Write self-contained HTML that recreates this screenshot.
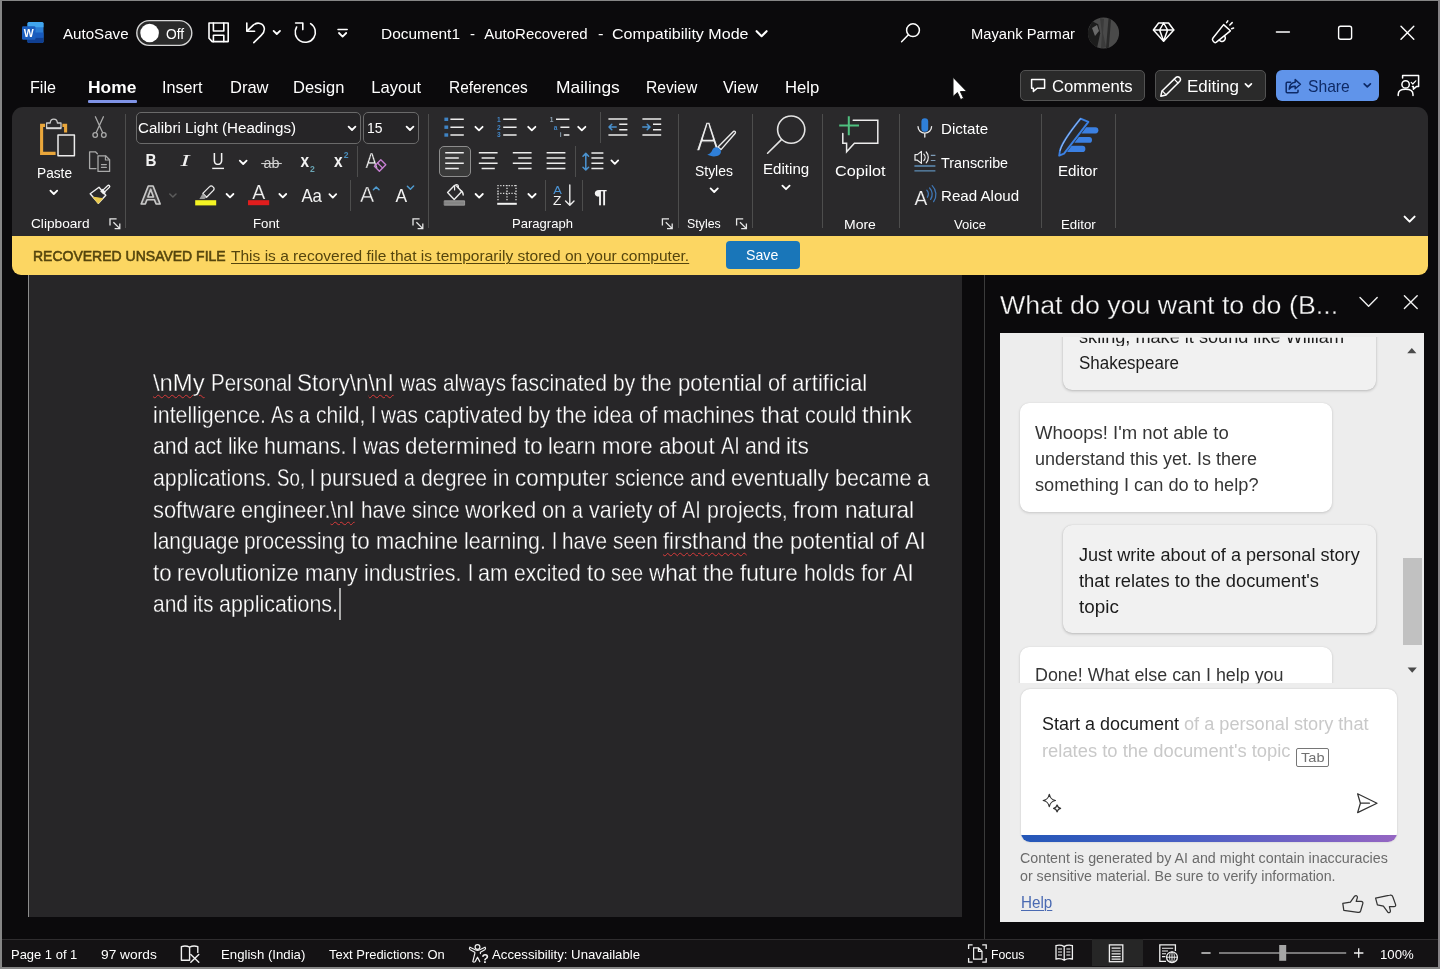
<!DOCTYPE html>
<html lang="en">
<head>
<meta charset="utf-8">
<title>Document1 - AutoRecovered - Compatibility Mode - Word</title>
<style>
*{box-sizing:border-box;margin:0;padding:0}
html,body{width:1440px;height:969px;overflow:hidden;background:#0b0a0c}
body{font-family:"Liberation Sans",sans-serif;color:#fff;position:relative}
.a{position:absolute}
.t{position:absolute;white-space:nowrap;line-height:1;transform-origin:0 0;color:#fff}
svg{position:absolute;overflow:visible}
#win{left:0;top:0;width:1440px;height:969px;background:#0b0a0c;border-left:2.2px solid #868686;border-right:2.1px solid #868386;border-top:1.9px solid #868686;border-bottom:2.3px solid #868686}
#ribbon{left:12px;top:107px;width:1416px;height:130px;background:#2a292b;border-radius:11px 11px 0 0}
#ybar{left:12px;top:236px;width:1416px;height:38.5px;background:#fcd662;border-radius:0 0 9px 9px}
#savebtn{left:726px;top:241px;width:73.5px;height:28px;background:#1976b9;border-radius:4px}
#page{left:28px;top:274.5px;width:934px;height:642px;background:#272628;border-left:1px solid #8c8c8c}
#vline{left:984px;top:274.5px;width:1px;height:664px;background:#3b3b3b}
#chat{left:1000px;top:332.5px;width:423.5px;height:589.5px;background:#ededed}
.bub{position:absolute;border-radius:9px}
.bub.u{background:#f1f1f1;box-shadow:0 1px 3px rgba(0,0,0,.22),0 0 1px rgba(0,0,0,.12)}
.bub.b{background:#fff;box-shadow:0 1px 3px rgba(0,0,0,.16),0 0 1px rgba(0,0,0,.1)}
#status{left:2px;top:939px;width:1436px;height:27.7px;background:#141214;border-top:1px solid #2f2d2f}
.btn{position:absolute;border-radius:5px;border:1px solid #525252;background:#2a2a2a}
.sep{position:absolute;width:1px;background:#4d4d4d}
.box{position:absolute;border:1px solid #6a6a6a;border-radius:5px;background:#262527}
.sq{text-decoration:underline wavy #d83b3b;text-decoration-thickness:1px;text-underline-offset:3px}
</style>
</head>
<body>
<div id="win" class="a"></div>
<!-- tab row buttons -->
<div class="a" style="left:88px;top:100px;width:49px;height:2.5px;background:#7f93e6;border-radius:1px"></div>
<div class="btn" style="left:1020px;top:70px;width:124.5px;height:31px"></div>
<div class="btn" style="left:1155px;top:70px;width:110.5px;height:31px"></div>
<div class="a" style="left:1276px;top:70px;width:103px;height:31px;background:#6094ea;border-radius:6px"></div>
<!-- ribbon -->
<div id="ribbon" class="a"></div>
<div class="sep" style="left:125px;top:114px;height:114px"></div>
<div class="sep" style="left:428px;top:114px;height:114px"></div>
<div class="sep" style="left:677.5px;top:114px;height:114px"></div>
<div class="sep" style="left:751.5px;top:114px;height:114px"></div>
<div class="sep" style="left:821.5px;top:114px;height:114px"></div>
<div class="sep" style="left:898.5px;top:114px;height:114px"></div>
<div class="sep" style="left:1041px;top:114px;height:114px"></div>
<div class="sep" style="left:1115px;top:114px;height:114px"></div>
<div class="sep" style="left:357px;top:146px;height:31px"></div>
<div class="sep" style="left:350px;top:180px;height:31px"></div>
<div class="sep" style="left:599.5px;top:112px;height:31px"></div>
<div class="sep" style="left:574.5px;top:146px;height:31px"></div>
<div class="sep" style="left:545px;top:180px;height:31px"></div>
<div class="sep" style="left:582px;top:180px;height:31px"></div>
<div class="box" style="left:135.5px;top:112px;width:225px;height:31.7px"></div>
<div class="box" style="left:363px;top:112px;width:55.5px;height:31.7px"></div>
<div class="a" style="left:438.5px;top:146px;width:32px;height:31px;border:1px solid #8d8d8d;border-radius:5px;background:#3a3a3a"></div>
<!-- yellow bar -->
<div id="ybar" class="a"></div>
<div id="savebtn" class="a"></div>
<!-- document -->
<div id="page" class="a"></div>
<div class="a" style="left:339.3px;top:588px;width:1.8px;height:32px;background:#ababab"></div>
<!-- pane -->
<div id="vline" class="a"></div>
<div id="chat" class="a"></div>
<div class="a" style="left:1000px;top:336.5px;width:402px;height:346px;overflow:hidden">
  <div class="bub u" style="left:62.5px;top:-24px;width:313px;height:77px"></div>
  <div class="bub b" style="left:19.5px;top:66px;width:312px;height:109px"></div>
  <div class="bub u" style="left:62.5px;top:188px;width:313px;height:108.5px"></div>
  <div class="bub b" style="left:19.5px;top:310px;width:312px;height:80px"></div>
</div>
<div class="a" style="left:1403px;top:558px;width:18.5px;height:87px;background:#c1c1c1"></div>
<div class="a" style="left:1020.5px;top:688.5px;width:376px;height:153.5px;background:#fff;border-radius:9px;box-shadow:0 0 2px rgba(0,0,0,.18);overflow:hidden">
  <div class="a" style="left:0;top:146.5px;width:376px;height:7px;background:linear-gradient(90deg,#2457b8 0%,#4a5fc4 45%,#7a62c4 80%,#9566c2 100%)"></div>
</div>
<div class="a" style="left:1295.5px;top:748px;width:33.5px;height:18.5px;border:1px solid #767676;border-radius:2px"></div>
<!-- status -->
<div id="status" class="a"></div>
<div class="a" style="left:1092px;top:939px;width:50.5px;height:27px;background:#262626"></div>
<svg id="icons" width="1440" height="969" viewBox="0 0 1440 969" style="left:0;top:0;will-change:transform" fill="none" stroke-linecap="round" stroke-linejoin="round">
<!-- ===== TITLE BAR ICONS ===== -->
<g id="word-icon" stroke="none">
  <rect x="27.5" y="22" width="16" height="21" rx="1.6" fill="#2b7cd3"/>
  <path d="M27.5 23.6a1.6 1.6 0 0 1 1.6-1.6h12.8a1.6 1.6 0 0 1 1.6 1.6V27.2H27.5z" fill="#41a5ee"/>
  <rect x="27.5" y="32.5" width="16" height="5.3" fill="#185abd"/>
  <path d="M27.5 37.8h16v3.6a1.6 1.6 0 0 1-1.6 1.6H29.1a1.6 1.6 0 0 1-1.6-1.6z" fill="#103f91"/>
  <rect x="22" y="26.3" width="13.5" height="13.5" rx="1.3" fill="#1b5ebe"/>
  <text x="28.75" y="36.8" font-family="Liberation Sans, sans-serif" font-size="10.5" font-weight="bold" fill="#fff" text-anchor="middle">W</text>
</g>
<g stroke="#fff" stroke-width="1.6">
  <!-- toggle -->
  <rect x="136.8" y="20.6" width="55" height="24.8" rx="12.4" fill="#2a2a2a" stroke="#d6d6d6" stroke-width="1.4"/>
  <circle cx="149.6" cy="33" r="9.3" fill="#fff" stroke="none"/>
  <!-- save -->
  <path d="M209 23H228.2V41.6H212.2L209 38.2Z"/>
  <path d="M213.4 23V31H223.8V23"/>
  <path d="M213.4 41.6V35.2H223.8V41.6"/>
  <!-- undo -->
  <path d="M246.8 23V31.2H254.6"/>
  <path d="M247.2 30.8L253.2 25.2C257.5 21.4 263.6 23.2 264.3 28.4C264.7 31.5 263.2 33.4 261.2 35.3L253.8 42.6"/>
  <path d="M273.6 30.9L276.8 34L280 30.9" stroke-width="1.8"/>
  <!-- redo -->
  <path d="M310.6 23.6A10.1 10.1 0 1 1 296.6 27"/>
  <path d="M295.6 23H302.8V29.6"/>
  <!-- qat -->
  <path d="M338 29.6H347.2" stroke-width="1.5"/>
  <path d="M339 33L342.6 36.6L346.2 33" stroke-width="1.8"/>
  <!-- title chevron -->
  <path d="M756.6 31.2L761.6 36.2L766.6 31.2" stroke-width="2.1"/>
  <!-- search -->
  <circle cx="913" cy="30.2" r="6.4" stroke-width="1.5"/>
  <path d="M908.4 34.8L901.6 41.8" stroke-width="1.5"/>
</g>
<!-- avatar -->
<g stroke="none">
  <circle cx="1103.5" cy="33" r="15.6" fill="#4a4a4a"/>
  <path d="M1088.2 30a15.6 15.6 0 0 0 9 17.2l3-14-2-9-6-3z" fill="#1c1c1c"/>
  <path d="M1100 18l4 1-1 14 3 14-5 1.2 1-15z" fill="#3b3b3b"/>
  <path d="M1108.5 18.4l2.5 1-2.2 28-2.8 1z" fill="#2a2a2a"/>
  <path d="M1092 28l5-3 2 6-4 5z" fill="#6a6a6a"/>
</g>
<g stroke="#fff" stroke-width="1.5">
  <!-- diamond -->
  <path d="M1158.6 23H1168.6L1173.8 30L1163.6 41.2L1153.4 30Z"/>
  <path d="M1153.6 30H1173.6M1163.6 23L1159.6 30L1163.6 41M1163.6 23L1167.6 30L1163.6 41"/>
  <!-- megaphone -->
  <path d="M1223.6 24.6L1230.4 30.8L1216.4 42.2C1215.4 42.9 1214.4 42.7 1213.8 41.9L1212.8 40.6C1212.2 39.8 1212.4 38.8 1213 38Z"/>
  <path d="M1219.4 40.2A3 3 0 0 0 1224.6 36"/>
  <path d="M1226.6 22.6L1227.8 20.8M1229.8 25L1232.2 22.6M1231.6 28.8L1233.6 28"/>
  <!-- window controls -->
  <path d="M1276.4 32H1289.4" stroke-width="1.4"/>
  <rect x="1338.6" y="26.2" width="13" height="13" rx="2" stroke-width="1.4"/>
  <path d="M1401 26.2L1413.8 39.2M1413.8 26.2L1401 39.2" stroke-width="1.4"/>
</g>
<!-- tab row -->
<g stroke="#fff" stroke-width="1.5">
  <path d="M1031.6 79.4H1044.6V88.2H1037.2L1033.4 91.4V88.2H1031.6Z"/>
  <!-- pencil -->
  <path d="M1176 77.4a2.4 2.4 0 0 1 3.4 0l0.4 0.4a2.4 2.4 0 0 1 0 3.4L1166 95l-5.2 1.2 1.2-5.2Z"/>
  <path d="M1174.2 79.2l3.8 3.8M1162.2 90.8l3.8 3.8" stroke-width="1.2"/>
  <path d="M1245.4 83.8L1248.4 86.8L1251.4 83.8" stroke-width="1.7"/>
  <!-- person feedback -->
  <circle cx="1405.6" cy="84.4" r="3.7"/>
  <path d="M1398.2 95.6v-1.2c0-3 2.6-5.2 7.4-5.2s7.4 2.2 7.4 5.2v1.2"/>
  <path d="M1402.6 78V75.4H1418.6V86.6H1416.4L1413.4 89.2V86.6H1412.4"/>
  <path d="M1411.2 82.4l1.6 1.6 3-3.2" stroke-width="1.2"/>
</g>
<g stroke="#0e2a66" stroke-width="1.5">
  <path d="M1290.6 82.2H1287.2C1286.6 82.2 1286.2 82.6 1286.2 83.2V91.8C1286.2 92.4 1286.6 92.8 1287.2 92.8H1297C1297.6 92.8 1298 92.4 1298 91.8V90.2"/>
  <path d="M1295.2 79.6L1300.4 84.2L1295.2 88.8V86.2C1292.2 86 1290.4 87 1289.2 89.2C1289.4 85.2 1291.4 82.6 1295.2 82.2Z"/>
  <path d="M1364.2 83.8L1367.3 86.9L1370.4 83.8" stroke-width="1.7"/>
</g>
<!-- mouse cursor -->
<path d="M953 77.6V96.6L957.4 92.6L960.6 99.6L963.6 98.2L960.4 91.6H966.6Z" fill="#fff" stroke="#111" stroke-width="1" stroke-linejoin="miter"/>

<!-- ===== RIBBON ICONS ===== -->
<!-- Paste -->
<g>
  <path d="M55.6 153.4H41.6V125.4H65.6V132.6" stroke="#e9a63b" stroke-width="3.1" stroke-linejoin="miter" stroke-linecap="butt"/>
  <rect x="45" y="122" width="17.4" height="8" fill="#2a292b" stroke="none"/>
  <path d="M46.6 127.8V123H50.2C50.4 120.6 51.8 119.2 53.8 119.2C55.8 119.2 57.2 120.6 57.4 123H61V127.8" stroke="#c9c9c9" stroke-width="1.3"/>
  <path d="M46.2 128.2H61.4" stroke="#d9d9d9" stroke-width="2" stroke-linecap="butt"/>
  <rect x="58" y="135" width="16.4" height="20.8" fill="#2c2b2c" stroke="#ececec" stroke-width="1.5"/>
  <path d="M50.4 190.6L53.8 194L57.2 190.6" stroke="#fff" stroke-width="1.8"/>
</g>
<!-- Cut -->
<g stroke="#a9a9a9" stroke-width="1.3">
  <path d="M95.4 116.8L102.6 132.6M103.4 116.8L96.2 132.6"/>
  <circle cx="95.2" cy="135" r="2.3"/>
  <circle cx="103.8" cy="135" r="2.3"/>
</g>
<!-- Copy -->
<g stroke="#a9a9a9" stroke-width="1.3">
  <path d="M96 168.6H89.6V151.8H95.4L97.4 153.8"/>
  <path d="M98 155.8H105.6L109.6 159.8V171.4H98Z"/>
  <path d="M105.4 156V160H109.4M101.4 164.6H106.4M101.4 167.4H106.4" stroke-width="1.1"/>
</g>
<!-- Format painter -->
<g>
  <path d="M90.2 193.8L99 187.2L105.8 195.2L98.4 203.2Z" fill="#2a292b" stroke="#f0f0f0" stroke-width="1.4"/>
  <path d="M93.4 197.2L102.6 198.6L98.4 203.2Z" fill="#e9c84b" stroke="#e9c84b" stroke-width="1"/>
  <path d="M101.4 190L104.6 193.4" stroke="#f0f0f0" stroke-width="3.4" stroke-linecap="butt"/>
  <path d="M104.2 190.6L108.6 186.4" stroke="#f0f0f0" stroke-width="3.6"/>
  <path d="M104.6 190.2L108.4 186.6" stroke="#2a292b" stroke-width="1.2"/>
</g>
<!-- dialog launchers -->
<path transform="translate(110 218.8)" d="M0 6.6V0H6.6M3.4 3.4L9.6 9.6M9.8 4.6V9.8H4.6" stroke="#e6e6e6" stroke-width="1.3" stroke-linecap="butt" stroke-linejoin="miter"/>
<path transform="translate(413 218.8)" d="M0 6.6V0H6.6M3.4 3.4L9.6 9.6M9.8 4.6V9.8H4.6" stroke="#e6e6e6" stroke-width="1.3" stroke-linecap="butt" stroke-linejoin="miter"/>
<path transform="translate(662.4 218.8)" d="M0 6.6V0H6.6M3.4 3.4L9.6 9.6M9.8 4.6V9.8H4.6" stroke="#e6e6e6" stroke-width="1.3" stroke-linecap="butt" stroke-linejoin="miter"/>
<path transform="translate(736.6 218.8)" d="M0 6.6V0H6.6M3.4 3.4L9.6 9.6M9.8 4.6V9.8H4.6" stroke="#e6e6e6" stroke-width="1.3" stroke-linecap="butt" stroke-linejoin="miter"/>
<!-- combobox chevrons -->
<g stroke="#fff" stroke-width="1.8">
  <path d="M348.6 126.6L352 130L355.4 126.6"/>
  <path d="M406.6 126.6L410 130L413.4 126.6"/>
  <!-- font row chevrons -->
  <path d="M239.8 160.6L243.2 164L246.6 160.6"/>
  <path d="M226.6 194L230 197.4L233.4 194"/>
  <path d="M279.4 194L282.8 197.4L286.2 194"/>
  <path d="M329.4 194.2L332.8 197.6L336.2 194.2"/>
  <!-- paragraph chevrons -->
  <path d="M475.4 126.8L479 130.4L482.6 126.8"/>
  <path d="M528.2 126.8L531.8 130.4L535.4 126.8"/>
  <path d="M578.2 126.8L581.8 130.4L585.4 126.8"/>
  <path d="M611.4 160.4L614.8 163.8L618.2 160.4"/>
  <path d="M475.6 194L479.2 197.6L482.8 194"/>
  <path d="M528.4 194L532 197.6L535.6 194"/>
  <!-- big button chevrons -->
  <path d="M710.6 188.4L714.2 192L717.8 188.4"/>
  <path d="M782.4 185.6L786 189.2L789.6 185.6"/>
  <!-- ribbon collapse -->
  <path d="M1404.6 216.6L1409.6 221.6L1414.6 216.6" stroke-width="2"/>
</g>
<path d="M169.8 194L172.9 197L176 194" stroke="#5c5c5c" stroke-width="1.5"/>
<!-- font row glyph-icons (real text) -->
<g font-family="Liberation Sans, sans-serif" stroke="none" fill="#f2f2f2">
  <text x="145.6" y="166.3" font-size="17.2" font-weight="bold" textLength="11" lengthAdjust="spacingAndGlyphs">B</text>
  <text x="180.4" y="166.3" font-size="17.5" font-style="italic" font-family="Liberation Serif, serif" textLength="9" lengthAdjust="spacingAndGlyphs">I</text>
  <text x="212.6" y="165.3" font-size="16" textLength="11" lengthAdjust="spacingAndGlyphs">U</text>
  <text x="263.6" y="167.8" font-size="15.5" fill="#d2d2d2" textLength="16" lengthAdjust="spacingAndGlyphs">ab</text>
  <text x="300.4" y="166.9" font-size="18" font-weight="bold" textLength="8.6" lengthAdjust="spacingAndGlyphs">x</text>
  <text x="310" y="171.8" font-size="8.6" fill="#6aa5b4" font-weight="bold">2</text>
  <text x="334" y="166.9" font-size="18" font-weight="bold" textLength="8.6" lengthAdjust="spacingAndGlyphs">x</text>
  <text x="343.8" y="158" font-size="8.6" fill="#4a8fbd" font-weight="bold">2</text>
  <text x="365.6" y="167.9" font-size="22.5" textLength="12" lengthAdjust="spacingAndGlyphs" stroke="#2a292b" stroke-width="0.4" paint-order="fill stroke">A</text>
  <text x="140.6" y="204.2" font-size="26" font-weight="bold" fill="#454445" stroke="#c9c9c9" stroke-width="1.5" textLength="20.4" lengthAdjust="spacingAndGlyphs">A</text>
  <text x="252.2" y="199.2" font-size="19.6" textLength="13" lengthAdjust="spacingAndGlyphs" stroke="#2a292b" stroke-width="0.2" paint-order="fill stroke">A</text>
  <text x="301.4" y="201.7" font-size="18.6" textLength="20.6" lengthAdjust="spacingAndGlyphs" stroke="none">Aa</text>
  <text x="360" y="201.9" font-size="22.6" textLength="14.2" lengthAdjust="spacingAndGlyphs" stroke="#2a292b" stroke-width="0.4" paint-order="fill stroke">A</text>
  <text x="395.6" y="201.9" font-size="18" textLength="11.6" lengthAdjust="spacingAndGlyphs" stroke="none">A</text>
  <text x="594" y="203" font-size="19" font-weight="bold" textLength="13.4" lengthAdjust="spacingAndGlyphs">¶</text>
  <text x="553.2" y="193.6" font-size="11" fill="#4b93d4" textLength="8.6" lengthAdjust="spacingAndGlyphs">A</text>
  <text x="553" y="205.4" font-size="12.2" textLength="8.4" lengthAdjust="spacingAndGlyphs">Z</text>
  <text x="914.6" y="205.4" font-size="19.6" textLength="12.8" lengthAdjust="spacingAndGlyphs" stroke="#2a292b" stroke-width="0.2" paint-order="fill stroke">A</text>
  <text x="696.2" y="151.4" font-size="42" textLength="23.2" lengthAdjust="spacingAndGlyphs" fill="#ececec" stroke="#2a292b" stroke-width="1.3" paint-order="fill stroke">A</text>
</g>
<!-- underline, strike -->
<path d="M212.2 168.4H224" stroke="#f2f2f2" stroke-width="1.4" stroke-linecap="butt"/>
<path d="M261.2 163.5H281.8" stroke="#d2d2d2" stroke-width="1.1" stroke-linecap="butt"/>
<!-- eraser -->
<path d="M380.8 159.8L385.8 164.8L379.4 171.2L374.4 166.2Z" stroke="#c77fd2" stroke-width="1.4"/>
<path d="M377.6 163L382.6 168" stroke="#c77fd2" stroke-width="1.2"/>
<!-- highlighter -->
<g>
  <path d="M209.6 186.6a2.2 2.2 0 0 1 3.2 0l0.6 0.6a2.2 2.2 0 0 1 0 3.2L206.6 197.2L202.8 193.4Z" stroke="#ececec" stroke-width="1.3"/>
  <path d="M202.6 193.6L206.4 197.4L204.4 199H199.4Z" fill="#9a9a9a" stroke="none"/>
  <rect x="195.2" y="200.2" width="21" height="5.2" fill="#f4f424" stroke="none"/>
  <rect x="248" y="200.2" width="21.2" height="5" fill="#e11d1d" stroke="none"/>
</g>
<!-- grow/shrink carets -->
<path d="M373.4 189.8L376.2 187L379 189.8" stroke="#4f9bcf" stroke-width="1.5"/>
<path d="M407.4 186.2L410.4 189.2L413.6 186" stroke="#4f9bcf" stroke-width="1.5"/>
<!-- bullets -->
<g stroke="none" fill="#3f83c4">
  <rect x="444.4" y="117.6" width="3.8" height="3.4"/><rect x="444.4" y="125.5" width="3.8" height="3.4"/><rect x="444.4" y="133.3" width="3.8" height="3.4"/>
</g>
<g stroke="#ececec" stroke-width="1.5" stroke-linecap="butt">
  <path d="M450.4 119.2H463.8M450.4 127.2H463.8M450.4 135H463.8"/>
  <path d="M503.2 119.2H516.6M503.2 127.2H516.6M503.2 135H516.6"/>
  <path d="M556 119.2H569.4M560.4 127.2H569.4M563.8 135H569.4"/>
  <!-- indent icons -->
  <path d="M608.4 119H627.4M619.2 124.3H627.4M619.2 129.7H627.4M608.4 134.9H627.4"/>
  <path d="M642.4 119H661.2M653 124.3H661.2M653 129.7H661.2M642.4 134.9H661.2"/>
  <!-- align -->
  <path d="M445.2 152.8H463.8M445.2 158.1H458.8M445.2 163.3H463.8M445.2 168.6H458.8"/>
  <path d="M478.8 152.8H497.6M481.6 158.1H494.8M478.8 163.3H497.6M481.6 168.6H494.8"/>
  <path d="M512.8 152.8H531.6M518.2 158.1H531.6M512.8 163.3H531.6M518.2 168.6H531.6"/>
  <path d="M546.6 152.8H565.4M546.6 158.1H565.4M546.6 163.3H565.4M546.6 168.6H565.4"/>
  <path d="M591.4 152.9H603.4M591.4 158.1H603.4M591.4 163.3H603.4M591.4 168.6H603.4"/>
</g>
<g font-family="Liberation Sans, sans-serif" stroke="none" fill="#4387c7" font-size="6.6" font-weight="bold">
  <text x="497" y="121.6">1</text><text x="497" y="129.6">2</text><text x="497" y="137.4">3</text>
  <text x="549.8" y="121.6" fill="#8ea3b5">1</text><text x="553.8" y="129.6">a</text><text x="559.8" y="137.4" fill="#8ea3b5">i</text>
</g>
<g stroke="#4b93d0" stroke-width="1.5">
  <path d="M616.2 127H609.2M611.8 124.2L609 127L611.8 129.8"/>
  <path d="M642.8 127H649.8M647.2 124.2L650 127L647.2 129.8"/>
  <path d="M585.8 153.6V169.8M583 156.2L585.8 153.4L588.6 156.2M583 167.2L585.8 170L588.6 167.2"/>
</g>
<!-- shading -->
<g>
  <path d="M454.4 185.4L447.6 192.6L454.2 199.4L461.8 191.4L456.6 186" stroke="#ececec" stroke-width="1.4"/>
  <path d="M454.6 190V186.6a1.9 1.9 0 0 1 3.8 0V188" stroke="#ececec" stroke-width="1.2"/>
  <path d="M460.4 190.4c1.6 0.6 2.8 2.2 2.8 4.6" stroke="#ececec" stroke-width="1.4"/>
  <rect x="444.6" y="200.8" width="20" height="4.4" fill="#858585" stroke="#a8a8a8" stroke-width="0.8"/>
</g>
<!-- borders -->
<g stroke="#dcdcdc" stroke-width="1.3" stroke-dasharray="1.3 1.5" stroke-linecap="butt">
  <path d="M497.4 185.6H516.6M497.4 193.4H516.6M498 185V201.8M507 185V201.8M516 185V201.8"/>
</g>
<path d="M497.2 203.8H516.8" stroke="#f2f2f2" stroke-width="2" stroke-linecap="butt"/>
<!-- sort arrow -->
<path d="M569.8 185V205M565.6 201L569.8 205.2L574 201" stroke="#ececec" stroke-width="1.4"/>
<!-- styles brush -->
<g>
  <path d="M733.4 131.4c1.4-0.8 2.6 0.4 1.8 1.8L721 149.6l-3-2.6Z" fill="#2a292b" stroke="#ececec" stroke-width="1.4"/>
  <path d="M707.2 154.6c3.4-0.6 4.2-2.8 5.4-5 1.2-2.2 4-3 6.4-1.4 2.4 1.6 2.6 4.6 0.8 6.2-3.6 3-9 2.2-12.6 0.2Z" fill="#2f7fd8" stroke="none"/>
</g>
<!-- editing magnifier -->
<g stroke="#e4e4e4" stroke-width="1.6">
  <circle cx="791.2" cy="129.6" r="13.6"/>
  <path d="M781.4 139.6L767.6 153.2"/>
</g>
<!-- copilot -->
<g>
  <path d="M853.2 120.2H877.8V143.2H854.4L846.6 151.8V143.2H842.8V133.4" stroke="#ececec" stroke-width="1.5" stroke-linejoin="miter"/>
  <path d="M839.2 125.4H859M848.8 116.2V135.2" stroke="#4fc07f" stroke-width="2" stroke-linecap="butt"/>
</g>
<!-- dictate -->
<g>
  <rect x="921.4" y="118.2" width="6.8" height="13.6" rx="3.4" fill="#2f7fd8" stroke="none"/>
  <path d="M918 126.6a6.8 6.6 0 0 0 13.6 0M924.8 133.4V137" stroke="#ececec" stroke-width="1.3"/>
</g>
<!-- transcribe -->
<g stroke="#ececec" stroke-width="1.2">
  <path d="M915 154.6H917.4L921.4 151.4V163.4L917.4 160.2H915Z"/>
  <path d="M923.8 154.2a4.6 4.6 0 0 1 0 6.4M926.2 152a8 8 0 0 1 0 10.8"/>
</g>
<path d="M930.8 155.4H935.4M930.8 160.5H935.4" stroke="#7f9db8" stroke-width="1.2" stroke-linecap="butt"/>
<path d="M914.4 166H935.4M914.4 170.8H935.4" stroke="#5d8db6" stroke-width="1.3" stroke-linecap="butt"/>
<!-- read aloud waves -->
<g stroke="#3f76b4" stroke-width="1.3">
  <path d="M926.8 190.2a6 6 0 0 1 0.6 7"/>
  <path d="M929.6 188a9 9 0 0 1 1 11.4"/>
  <path d="M932.2 185.6a12.4 12.4 0 0 1 1.4 16"/>
</g>
<!-- editor -->
<g>
  <path d="M1080.6 118.6L1088.4 121.8L1064 153.6L1059.2 155.6L1060 150.6C1061.4 143.6 1071.4 130 1080.6 118.6Z" stroke="#3b80e2" stroke-width="1.9"/>
  <path d="M1080.4 118.8C1071.4 130 1061.6 143.6 1060.2 150.4" stroke="#a8c4ee" stroke-width="0.9"/>
  <path d="M1086.2 127.2H1095.4a3 3.1 0 0 1 0 6.2H1081.4Z" fill="#3b80e2" stroke="none"/>
  <path d="M1078.8 137H1089.2a2.8 2.9 0 0 1 0 5.8H1074.4Z" fill="#3b80e2" stroke="none"/>
  <path d="M1071.6 145.8H1082.4a3 3.1 0 0 1 0 6.2H1067Z" fill="#3b80e2" stroke="none"/>
</g>

<!-- ===== PANE ICONS ===== -->
<g stroke="#f0f0f0" stroke-width="1.4">
  <path d="M1360 297.6L1368.6 306.2L1377.2 297.6"/>
  <path d="M1404.4 295.8L1417.2 308.6M1417.2 295.8L1404.4 308.6"/>
</g>
<g stroke="none" fill="#4a4a4a">
  <path d="M1407.2 353.2L1411.8 348L1416.4 353.2Z"/>
  <path d="M1407.6 667.6H1416.8L1412.2 672.8Z"/>
</g>
<g stroke="#333" stroke-width="1.25">
  <path d="M1049.3 794.4C1050.3 798.4 1051.6 799.6 1055.4 800.5C1051.6 801.4 1050.3 802.6 1049.3 806.6C1048.3 802.6 1047 801.4 1043.2 800.5C1047 799.6 1048.3 798.4 1049.3 794.4Z"/>
  <path d="M1057.1 805C1057.7 807.2 1058.3 807.8 1060.6 808.4C1058.3 809 1057.7 809.6 1057.1 811.8C1056.5 809.6 1055.9 809 1053.6 808.4C1055.9 807.8 1056.5 807.2 1057.1 805Z"/>
  <path d="M1357.6 793.8L1377 803.2L1357.6 812.6L1360.4 803.2Z"/>
  <path d="M1360.6 803.2H1369.4"/>
  <path d="M1342.8 903.4L1350.4 902.2L1354.6 896.2C1356 895 1357.6 895.8 1357.4 897.6L1356.2 901.4H1361.2C1362.6 901.4 1363.2 902.4 1362.8 903.6L1360.6 911C1360.2 912.2 1359.2 912.6 1358 912.4L1343.8 910.4Z"/>
  <path d="M1375.6 898.2L1389.8 895.2C1391.4 894.8 1392.4 895.6 1392.8 896.8L1395.6 904.6C1396 905.8 1395.2 906.6 1394 906.6H1389.4L1390.4 910.8C1390.6 912.6 1389 913.2 1387.8 912.2L1383.4 906.2L1377.4 904.8Z"/>
</g>

<!-- ===== STATUS ICONS ===== -->
<g stroke="#f0f0f0" stroke-width="1.4">
  <path d="M189.6 947.2C187 945.8 184 945.8 181.4 946.6V960.2H189.6V947.2C192.2 945.8 195.2 945.8 197.8 946.6V952.4"/>
  <path d="M190.8 954.4L198.8 962.2M198.8 954.4L190.8 962.2"/>
  <!-- accessibility -->
  <circle cx="477.5" cy="947" r="2.4" stroke-width="1.2"/>
  <path d="M470 947.2L475.2 949.8Q477.5 950.8 479.8 949.8L485 947.2Q486.2 948.6 484.8 949.8L480.4 952.2V953.6M479.8 961.6L477.5 957.2L475.2 961.6Q474 962.8 472.8 961.6L474.8 953.6V952.2L470.2 949.8Q468.8 948.6 470 947.2" stroke-width="1.2"/>
</g>
<text x="481.4" y="962.8" font-family="Liberation Sans, sans-serif" font-size="12" font-weight="bold" fill="#f0f0f0" stroke="none">?</text>
<g stroke="#f0f0f0" stroke-width="1.3" stroke-linecap="butt" stroke-linejoin="miter">
  <!-- focus -->
  <path d="M968.6 949V944.9H972.6M982.2 944.9H986.2V949M986.2 958V962.1H982.2M972.6 962.1H968.6V958"/>
  <path d="M973.6 947.8H978.6L982 951.2V959.2H973.6ZM978.4 948V951.4H981.8" stroke-width="1.2"/>
  <!-- read mode -->
  <path d="M1064.2 946.6C1061.6 945 1058.6 945 1056 945.6V959C1058.6 958.4 1061.6 958.6 1064.2 960.2C1066.8 958.6 1069.8 958.4 1072.4 959V945.6C1069.8 945 1066.8 945 1064.2 946.6ZM1064.2 946.6V960"/>
  <path d="M1058 949H1062M1058 952H1062M1058 955H1062M1066.4 949H1070.4M1066.4 952H1070.4M1066.4 955H1070.4" stroke-width="1.1"/>
  <!-- print layout -->
  <rect x="1109.4" y="944.9" width="13.4" height="16.8"/>
  <path d="M1111.6 948.2H1120.6M1111.6 951H1120.6M1111.6 953.8H1120.6M1111.6 956.6H1120.6M1111.6 959.2H1120.6" stroke-width="1.2"/>
  <!-- web layout -->
  <path d="M1166 961.4H1159.8V944.9H1175.4V951"/>
  <path d="M1162 948.2H1173.2M1162 951H1168M1162 953.8H1166M1162 956.6H1165.4" stroke-width="1.1"/>
  <circle cx="1172" cy="957.2" r="5.4" fill="#0b0a0c"/>
  <path d="M1166.8 957.2H1177.2M1172 952V962.4" stroke-width="1"/>
  <ellipse cx="1172" cy="957.2" rx="2.4" ry="5.2" stroke-width="0.9"/>
  <!-- zoom -->
  <path d="M1201.4 953H1210.6" stroke-width="1.3"/>
  <path d="M1219 953H1346.2" stroke-width="1.2" stroke="#dcdcdc"/>
  <path d="M1354 953H1363.4M1358.7 948.3V957.7" stroke-width="1.3"/>
</g>
<rect x="1279.2" y="945" width="7" height="15.8" fill="#a6a6a6" stroke="none"/>

</svg>
<div id="texts" style="will-change:transform">
<span class="t" id="t0" style="left:63.20px;top:25.91px;font-size:15px;transform:scaleX(1.0085);">AutoSave</span>
<span class="t" id="t1" style="left:165.50px;top:25.91px;font-size:15px;transform:scaleX(0.9172);">Off</span>
<span class="t" id="t2" style="left:380.50px;top:25.91px;font-size:15px;transform:scaleX(1.0297);">Document1</span>
<span class="t" id="t3" style="left:470.00px;top:25.91px;font-size:15px;">-</span>
<span class="t" id="t4" style="left:484.20px;top:25.91px;font-size:15px;">AutoRecovered</span>
<span class="t" id="t5" style="left:597.50px;top:25.91px;font-size:15px;transform:scaleX(1.1000);">-</span>
<span class="t" id="t6" style="left:612.00px;top:25.91px;font-size:15px;transform:scaleX(1.0701);">Compatibility Mode</span>
<span class="t" id="t7" style="left:970.50px;top:25.91px;font-size:15px;transform:scaleX(0.9823);">Mayank Parmar</span>
<span class="t" id="t8" style="left:29.50px;top:79.90px;font-size:16.6px;transform:scaleX(0.9720);">File</span>
<span class="t" id="t9" style="left:88.20px;top:79.90px;font-size:16.6px;transform:scaleX(1.0475);font-weight:bold;">Home</span>
<span class="t" id="t10" style="left:162.00px;top:79.90px;font-size:16.6px;transform:scaleX(0.9755);">Insert</span>
<span class="t" id="t11" style="left:229.50px;top:79.90px;font-size:16.6px;transform:scaleX(0.9939);">Draw</span>
<span class="t" id="t12" style="left:293.20px;top:79.90px;font-size:16.6px;transform:scaleX(0.9931);">Design</span>
<span class="t" id="t13" style="left:371.20px;top:79.90px;font-size:16.6px;">Layout</span>
<span class="t" id="t14" style="left:449.20px;top:79.90px;font-size:16.6px;transform:scaleX(0.9286);">References</span>
<span class="t" id="t15" style="left:556.20px;top:79.90px;font-size:16.6px;transform:scaleX(1.0480);">Mailings</span>
<span class="t" id="t16" style="left:645.50px;top:79.90px;font-size:16.6px;transform:scaleX(0.9426);">Review</span>
<span class="t" id="t17" style="left:723.00px;top:79.90px;font-size:16.6px;transform:scaleX(0.9812);">View</span>
<span class="t" id="t18" style="left:784.50px;top:79.90px;font-size:16.6px;transform:scaleX(1.0047);">Help</span>
<span class="t" id="t19" style="left:1051.60px;top:77.90px;font-size:16.2px;transform:scaleX(1.0311);">Comments</span>
<span class="t" id="t20" style="left:1186.70px;top:78.11px;font-size:16.2px;transform:scaleX(1.0485);">Editing</span>
<span class="t" id="t21" style="left:1307.50px;top:78.11px;font-size:16.2px;transform:scaleX(0.9675);color:#0e2a66;">Share</span>
<span class="t" id="t22" style="left:36.80px;top:164.70px;font-size:15px;transform:scaleX(0.9124);">Paste</span>
<span class="t" id="t23" style="left:31.40px;top:216.81px;font-size:13.5px;transform:scaleX(1.0122);">Clipboard</span>
<span class="t" id="t24" style="left:138.20px;top:120.41px;font-size:15.5px;transform:scaleX(0.9755);">Calibri Light (Headings)</span>
<span class="t" id="t25" style="left:366.70px;top:120.41px;font-size:15.5px;transform:scaleX(0.8986);">15</span>
<span class="t" id="t26" style="left:252.50px;top:216.81px;font-size:13.5px;transform:scaleX(0.9809);">Font</span>
<span class="t" id="t27" style="left:511.90px;top:216.81px;font-size:13.5px;transform:scaleX(0.9659);">Paragraph</span>
<span class="t" id="t28" style="left:695.30px;top:163.01px;font-size:15px;transform:scaleX(0.9276);">Styles</span>
<span class="t" id="t29" style="left:686.50px;top:216.81px;font-size:13.5px;transform:scaleX(0.9166);">Styles</span>
<span class="t" id="t30" style="left:762.80px;top:161.01px;font-size:15px;transform:scaleX(1.0071);">Editing</span>
<span class="t" id="t31" style="left:835.00px;top:163.01px;font-size:15px;transform:scaleX(1.0834);">Copilot</span>
<span class="t" id="t32" style="left:843.80px;top:217.62px;font-size:13.5px;transform:scaleX(1.0369);">More</span>
<span class="t" id="t33" style="left:940.90px;top:120.81px;font-size:15px;transform:scaleX(1.0088);">Dictate</span>
<span class="t" id="t34" style="left:940.90px;top:154.51px;font-size:15px;transform:scaleX(0.9543);">Transcribe</span>
<span class="t" id="t35" style="left:940.90px;top:188.20px;font-size:15px;transform:scaleX(1.0067);">Read Aloud</span>
<span class="t" id="t36" style="left:954.00px;top:217.62px;font-size:13.5px;transform:scaleX(0.9658);">Voice</span>
<span class="t" id="t37" style="left:1058.40px;top:163.01px;font-size:15px;transform:scaleX(1.0105);">Editor</span>
<span class="t" id="t38" style="left:1060.90px;top:217.62px;font-size:13.5px;transform:scaleX(0.9835);">Editor</span>
<span class="t" id="t39" style="left:33.00px;top:249.21px;font-size:14px;color:#55450d;-webkit-text-stroke:0.55px #55450d;">RECOVERED UNSAVED FILE</span>
<span class="t" id="t40" style="left:231.20px;top:248.20px;font-size:15px;transform:scaleX(1.0350);color:#55450d;text-decoration:underline;text-decoration-thickness:1px;text-underline-offset:2px;">This is a recovered file that is temporarily stored on your computer.</span>
<span class="t" id="t41" style="left:746.00px;top:247.20px;font-size:15px;transform:scaleX(0.9444);">Save</span>
<span class="t" id="t42" style="left:152.50px;top:371.21px;font-size:24px;transform:scaleX(0.9928);color:#fff;-webkit-text-stroke:0.3px #272628;white-space:pre;"><span class="sq">\nMy</span> </span>
<span class="t" id="t43" style="left:210.76px;top:371.21px;font-size:24px;transform:scaleX(0.8536);color:#fff;-webkit-text-stroke:0.3px #272628;white-space:pre;">Personal </span>
<span class="t" id="t44" style="left:297.31px;top:371.21px;font-size:24px;transform:scaleX(0.9411);color:#fff;-webkit-text-stroke:0.3px #272628;white-space:pre;">Story\n<span class="sq">\nI</span> </span>
<span class="t" id="t45" style="left:400.25px;top:371.21px;font-size:24px;transform:scaleX(0.8610);color:#fff;-webkit-text-stroke:0.3px #272628;white-space:pre;">was </span>
<span class="t" id="t46" style="left:442.75px;top:371.21px;font-size:24px;transform:scaleX(0.8582);color:#fff;-webkit-text-stroke:0.3px #272628;white-space:pre;">always </span>
<span class="t" id="t47" style="left:511.43px;top:371.21px;font-size:24px;transform:scaleX(0.8771);color:#fff;-webkit-text-stroke:0.3px #272628;white-space:pre;">fascinated </span>
<span class="t" id="t48" style="left:613.24px;top:371.21px;font-size:24px;transform:scaleX(0.8719);color:#fff;-webkit-text-stroke:0.3px #272628;white-space:pre;">by </span>
<span class="t" id="t49" style="left:641.16px;top:371.21px;font-size:24px;transform:scaleX(0.9200);color:#fff;-webkit-text-stroke:0.3px #272628;white-space:pre;">the </span>
<span class="t" id="t50" style="left:677.99px;top:371.21px;font-size:24px;transform:scaleX(0.9242);color:#fff;-webkit-text-stroke:0.3px #272628;white-space:pre;">potential </span>
<span class="t" id="t51" style="left:768.02px;top:371.21px;font-size:24px;transform:scaleX(0.9075);color:#fff;-webkit-text-stroke:0.3px #272628;white-space:pre;">of </span>
<span class="t" id="t52" style="left:792.24px;top:371.21px;font-size:24px;transform:scaleX(0.9251);color:#fff;-webkit-text-stroke:0.3px #272628;white-space:pre;">artificial</span>
<span class="t" id="t53" style="left:152.50px;top:402.82px;font-size:24px;transform:scaleX(0.8915);color:#fff;-webkit-text-stroke:0.3px #272628;white-space:pre;">intelligence. </span>
<span class="t" id="t54" style="left:271.45px;top:402.82px;font-size:24px;transform:scaleX(0.8067);color:#fff;-webkit-text-stroke:0.3px #272628;white-space:pre;">As </span>
<span class="t" id="t55" style="left:299.43px;top:402.82px;font-size:24px;transform:scaleX(0.8104);color:#fff;-webkit-text-stroke:0.3px #272628;white-space:pre;">a </span>
<span class="t" id="t56" style="left:315.65px;top:402.82px;font-size:24px;transform:scaleX(0.8803);color:#fff;-webkit-text-stroke:0.3px #272628;white-space:pre;">child, </span>
<span class="t" id="t57" style="left:370.85px;top:402.82px;font-size:24px;transform:scaleX(0.7659);color:#fff;-webkit-text-stroke:0.3px #272628;white-space:pre;">I </span>
<span class="t" id="t58" style="left:381.07px;top:402.82px;font-size:24px;transform:scaleX(0.8658);color:#fff;-webkit-text-stroke:0.3px #272628;white-space:pre;">was </span>
<span class="t" id="t59" style="left:423.80px;top:402.82px;font-size:24px;transform:scaleX(0.8992);color:#fff;-webkit-text-stroke:0.3px #272628;white-space:pre;">captivated </span>
<span class="t" id="t60" style="left:528.18px;top:402.82px;font-size:24px;transform:scaleX(0.8768);color:#fff;-webkit-text-stroke:0.3px #272628;white-space:pre;">by </span>
<span class="t" id="t61" style="left:556.25px;top:402.82px;font-size:24px;transform:scaleX(0.9251);color:#fff;-webkit-text-stroke:0.3px #272628;white-space:pre;">the </span>
<span class="t" id="t62" style="left:593.29px;top:402.82px;font-size:24px;transform:scaleX(0.8780);color:#fff;-webkit-text-stroke:0.3px #272628;white-space:pre;">idea </span>
<span class="t" id="t63" style="left:638.98px;top:402.82px;font-size:24px;transform:scaleX(0.9126);color:#fff;-webkit-text-stroke:0.3px #272628;white-space:pre;">of </span>
<span class="t" id="t64" style="left:663.34px;top:402.82px;font-size:24px;transform:scaleX(0.8902);color:#fff;-webkit-text-stroke:0.3px #272628;white-space:pre;">machines </span>
<span class="t" id="t65" style="left:760.72px;top:402.82px;font-size:24px;transform:scaleX(0.9409);color:#fff;-webkit-text-stroke:0.3px #272628;white-space:pre;">that </span>
<span class="t" id="t66" style="left:804.66px;top:402.82px;font-size:24px;transform:scaleX(0.8972);color:#fff;-webkit-text-stroke:0.3px #272628;white-space:pre;">could </span>
<span class="t" id="t67" style="left:862.13px;top:402.82px;font-size:24px;transform:scaleX(0.9837);color:#fff;-webkit-text-stroke:0.3px #272628;white-space:pre;">think</span>
<span class="t" id="t68" style="left:152.50px;top:434.32px;font-size:24px;transform:scaleX(0.8874);color:#fff;-webkit-text-stroke:0.3px #272628;white-space:pre;">and </span>
<span class="t" id="t69" style="left:193.96px;top:434.32px;font-size:24px;transform:scaleX(0.8720);color:#fff;-webkit-text-stroke:0.3px #272628;white-space:pre;">act </span>
<span class="t" id="t70" style="left:227.69px;top:434.32px;font-size:24px;transform:scaleX(0.8499);color:#fff;-webkit-text-stroke:0.3px #272628;white-space:pre;">like </span>
<span class="t" id="t71" style="left:263.97px;top:434.32px;font-size:24px;transform:scaleX(0.8965);color:#fff;-webkit-text-stroke:0.3px #272628;white-space:pre;">humans. </span>
<span class="t" id="t72" style="left:352.47px;top:434.32px;font-size:24px;transform:scaleX(0.7637);color:#fff;-webkit-text-stroke:0.3px #272628;white-space:pre;">I </span>
<span class="t" id="t73" style="left:362.66px;top:434.32px;font-size:24px;transform:scaleX(0.8634);color:#fff;-webkit-text-stroke:0.3px #272628;white-space:pre;">was </span>
<span class="t" id="t74" style="left:405.28px;top:434.32px;font-size:24px;transform:scaleX(0.9332);color:#fff;-webkit-text-stroke:0.3px #272628;white-space:pre;">determined </span>
<span class="t" id="t75" style="left:523.55px;top:434.32px;font-size:24px;transform:scaleX(0.9298);color:#fff;-webkit-text-stroke:0.3px #272628;white-space:pre;">to </span>
<span class="t" id="t76" style="left:548.37px;top:434.32px;font-size:24px;transform:scaleX(0.8918);color:#fff;-webkit-text-stroke:0.3px #272628;white-space:pre;">learn </span>
<span class="t" id="t77" style="left:601.92px;top:434.32px;font-size:24px;transform:scaleX(0.9263);color:#fff;-webkit-text-stroke:0.3px #272628;white-space:pre;">more </span>
<span class="t" id="t78" style="left:658.76px;top:434.32px;font-size:24px;transform:scaleX(0.9257);color:#fff;-webkit-text-stroke:0.3px #272628;white-space:pre;">about </span>
<span class="t" id="t79" style="left:720.53px;top:434.32px;font-size:24px;transform:scaleX(0.8259);color:#fff;-webkit-text-stroke:0.3px #272628;white-space:pre;">AI </span>
<span class="t" id="t80" style="left:744.77px;top:434.32px;font-size:24px;transform:scaleX(0.8874);color:#fff;-webkit-text-stroke:0.3px #272628;white-space:pre;">and </span>
<span class="t" id="t81" style="left:786.23px;top:434.32px;font-size:24px;transform:scaleX(0.9489);color:#fff;-webkit-text-stroke:0.3px #272628;white-space:pre;">its</span>
<span class="t" id="t82" style="left:152.50px;top:465.91px;font-size:24px;transform:scaleX(0.8878);color:#fff;-webkit-text-stroke:0.3px #272628;white-space:pre;">applications. </span>
<span class="t" id="t83" style="left:276.88px;top:465.91px;font-size:24px;transform:scaleX(0.7797);color:#fff;-webkit-text-stroke:0.3px #272628;white-space:pre;">So, </span>
<span class="t" id="t84" style="left:310.17px;top:465.91px;font-size:24px;transform:scaleX(0.7648);color:#fff;-webkit-text-stroke:0.3px #272628;white-space:pre;">I </span>
<span class="t" id="t85" style="left:320.38px;top:465.91px;font-size:24px;transform:scaleX(0.8991);color:#fff;-webkit-text-stroke:0.3px #272628;white-space:pre;">pursued </span>
<span class="t" id="t86" style="left:404.36px;top:465.91px;font-size:24px;transform:scaleX(0.8092);color:#fff;-webkit-text-stroke:0.3px #272628;white-space:pre;">a </span>
<span class="t" id="t87" style="left:420.56px;top:465.91px;font-size:24px;transform:scaleX(0.8852);color:#fff;-webkit-text-stroke:0.3px #272628;white-space:pre;">degree </span>
<span class="t" id="t88" style="left:492.62px;top:465.91px;font-size:24px;transform:scaleX(0.8782);color:#fff;-webkit-text-stroke:0.3px #272628;white-space:pre;">in </span>
<span class="t" id="t89" style="left:514.89px;top:465.91px;font-size:24px;transform:scaleX(0.9340);color:#fff;-webkit-text-stroke:0.3px #272628;white-space:pre;">computer </span>
<span class="t" id="t90" style="left:614.56px;top:465.91px;font-size:24px;transform:scaleX(0.8535);color:#fff;-webkit-text-stroke:0.3px #272628;white-space:pre;">science </span>
<span class="t" id="t91" style="left:689.70px;top:465.91px;font-size:24px;transform:scaleX(0.8886);color:#fff;-webkit-text-stroke:0.3px #272628;white-space:pre;">and </span>
<span class="t" id="t92" style="left:731.22px;top:465.91px;font-size:24px;transform:scaleX(0.9022);color:#fff;-webkit-text-stroke:0.3px #272628;white-space:pre;">eventually </span>
<span class="t" id="t93" style="left:834.74px;top:465.91px;font-size:24px;transform:scaleX(0.8941);color:#fff;-webkit-text-stroke:0.3px #272628;white-space:pre;">became </span>
<span class="t" id="t94" style="left:917.06px;top:465.91px;font-size:24px;transform:scaleX(0.9462);color:#fff;-webkit-text-stroke:0.3px #272628;white-space:pre;">a</span>
<span class="t" id="t95" style="left:152.50px;top:497.51px;font-size:24px;transform:scaleX(0.9111);color:#fff;-webkit-text-stroke:0.3px #272628;white-space:pre;">software </span>
<span class="t" id="t96" style="left:241.21px;top:497.51px;font-size:24px;transform:scaleX(0.9060);color:#fff;-webkit-text-stroke:0.3px #272628;white-space:pre;">engineer.<span class="sq">\nI</span> </span>
<span class="t" id="t97" style="left:360.92px;top:497.51px;font-size:24px;transform:scaleX(0.8643);color:#fff;-webkit-text-stroke:0.3px #272628;white-space:pre;">have </span>
<span class="t" id="t98" style="left:411.67px;top:497.51px;font-size:24px;transform:scaleX(0.8487);color:#fff;-webkit-text-stroke:0.3px #272628;white-space:pre;">since </span>
<span class="t" id="t99" style="left:464.89px;top:497.51px;font-size:24px;transform:scaleX(0.9202);color:#fff;-webkit-text-stroke:0.3px #272628;white-space:pre;">worked </span>
<span class="t" id="t100" style="left:542.22px;top:497.51px;font-size:24px;transform:scaleX(0.9020);color:#fff;-webkit-text-stroke:0.3px #272628;white-space:pre;">on </span>
<span class="t" id="t101" style="left:572.33px;top:497.51px;font-size:24px;transform:scaleX(0.8084);color:#fff;-webkit-text-stroke:0.3px #272628;white-space:pre;">a </span>
<span class="t" id="t102" style="left:588.51px;top:497.51px;font-size:24px;transform:scaleX(0.8979);color:#fff;-webkit-text-stroke:0.3px #272628;white-space:pre;">variety </span>
<span class="t" id="t103" style="left:657.97px;top:497.51px;font-size:24px;transform:scaleX(0.9105);color:#fff;-webkit-text-stroke:0.3px #272628;white-space:pre;">of </span>
<span class="t" id="t104" style="left:682.27px;top:497.51px;font-size:24px;transform:scaleX(0.8263);color:#fff;-webkit-text-stroke:0.3px #272628;white-space:pre;">AI </span>
<span class="t" id="t105" style="left:706.52px;top:497.51px;font-size:24px;transform:scaleX(0.8908);color:#fff;-webkit-text-stroke:0.3px #272628;white-space:pre;">projects, </span>
<span class="t" id="t106" style="left:793.26px;top:497.51px;font-size:24px;transform:scaleX(0.9460);color:#fff;-webkit-text-stroke:0.3px #272628;white-space:pre;">from </span>
<span class="t" id="t107" style="left:844.97px;top:497.51px;font-size:24px;transform:scaleX(0.9405);color:#fff;-webkit-text-stroke:0.3px #272628;white-space:pre;">natural</span>
<span class="t" id="t108" style="left:152.50px;top:529.01px;font-size:24px;transform:scaleX(0.8722);color:#fff;-webkit-text-stroke:0.3px #272628;white-space:pre;">language </span>
<span class="t" id="t109" style="left:244.47px;top:529.01px;font-size:24px;transform:scaleX(0.8683);color:#fff;-webkit-text-stroke:0.3px #272628;white-space:pre;">processing </span>
<span class="t" id="t110" style="left:351.03px;top:529.01px;font-size:24px;transform:scaleX(0.9313);color:#fff;-webkit-text-stroke:0.3px #272628;white-space:pre;">to </span>
<span class="t" id="t111" style="left:375.89px;top:529.01px;font-size:24px;transform:scaleX(0.9051);color:#fff;-webkit-text-stroke:0.3px #272628;white-space:pre;">machine </span>
<span class="t" id="t112" style="left:464.03px;top:529.01px;font-size:24px;transform:scaleX(0.8896);color:#fff;-webkit-text-stroke:0.3px #272628;white-space:pre;">learning. </span>
<span class="t" id="t113" style="left:551.87px;top:529.01px;font-size:24px;transform:scaleX(0.7650);color:#fff;-webkit-text-stroke:0.3px #272628;white-space:pre;">I </span>
<span class="t" id="t114" style="left:562.07px;top:529.01px;font-size:24px;transform:scaleX(0.8654);color:#fff;-webkit-text-stroke:0.3px #272628;white-space:pre;">have </span>
<span class="t" id="t115" style="left:612.89px;top:529.01px;font-size:24px;transform:scaleX(0.8583);color:#fff;-webkit-text-stroke:0.3px #272628;white-space:pre;">seen </span>
<span class="t" id="t116" style="left:663.29px;top:529.01px;font-size:24px;transform:scaleX(0.9090);color:#fff;-webkit-text-stroke:0.3px #272628;white-space:pre;"><span class="sq">firsthand</span> </span>
<span class="t" id="t117" style="left:753.04px;top:529.01px;font-size:24px;transform:scaleX(0.9240);color:#fff;-webkit-text-stroke:0.3px #272628;white-space:pre;">the </span>
<span class="t" id="t118" style="left:790.03px;top:529.01px;font-size:24px;transform:scaleX(0.9283);color:#fff;-webkit-text-stroke:0.3px #272628;white-space:pre;">potential </span>
<span class="t" id="t119" style="left:880.46px;top:529.01px;font-size:24px;transform:scaleX(0.9115);color:#fff;-webkit-text-stroke:0.3px #272628;white-space:pre;">of </span>
<span class="t" id="t120" style="left:904.78px;top:529.01px;font-size:24px;transform:scaleX(0.9132);color:#fff;-webkit-text-stroke:0.3px #272628;white-space:pre;">AI</span>
<span class="t" id="t121" style="left:152.50px;top:560.62px;font-size:24px;transform:scaleX(0.9309);color:#fff;-webkit-text-stroke:0.3px #272628;white-space:pre;">to </span>
<span class="t" id="t122" style="left:177.34px;top:560.62px;font-size:24px;transform:scaleX(0.9046);color:#fff;-webkit-text-stroke:0.3px #272628;white-space:pre;">revolutionize </span>
<span class="t" id="t123" style="left:305.28px;top:560.62px;font-size:24px;transform:scaleX(0.9022);color:#fff;-webkit-text-stroke:0.3px #272628;white-space:pre;">many </span>
<span class="t" id="t124" style="left:364.25px;top:560.62px;font-size:24px;transform:scaleX(0.8906);color:#fff;-webkit-text-stroke:0.3px #272628;white-space:pre;">industries. </span>
<span class="t" id="t125" style="left:467.62px;top:560.62px;font-size:24px;transform:scaleX(0.7646);color:#fff;-webkit-text-stroke:0.3px #272628;white-space:pre;">I </span>
<span class="t" id="t126" style="left:477.82px;top:560.62px;font-size:24px;transform:scaleX(0.9013);color:#fff;-webkit-text-stroke:0.3px #272628;white-space:pre;">am </span>
<span class="t" id="t127" style="left:513.89px;top:560.62px;font-size:24px;transform:scaleX(0.8782);color:#fff;-webkit-text-stroke:0.3px #272628;white-space:pre;">excited </span>
<span class="t" id="t128" style="left:586.53px;top:560.62px;font-size:24px;transform:scaleX(0.9309);color:#fff;-webkit-text-stroke:0.3px #272628;white-space:pre;">to </span>
<span class="t" id="t129" style="left:611.38px;top:560.62px;font-size:24px;transform:scaleX(0.8313);color:#fff;-webkit-text-stroke:0.3px #272628;white-space:pre;">see </span>
<span class="t" id="t130" style="left:649.10px;top:560.62px;font-size:24px;transform:scaleX(0.9393);color:#fff;-webkit-text-stroke:0.3px #272628;white-space:pre;">what </span>
<span class="t" id="t131" style="left:702.99px;top:560.62px;font-size:24px;transform:scaleX(0.9236);color:#fff;-webkit-text-stroke:0.3px #272628;white-space:pre;">the </span>
<span class="t" id="t132" style="left:739.97px;top:560.62px;font-size:24px;transform:scaleX(0.9423);color:#fff;-webkit-text-stroke:0.3px #272628;white-space:pre;">future </span>
<span class="t" id="t133" style="left:804.09px;top:560.62px;font-size:24px;transform:scaleX(0.8860);color:#fff;-webkit-text-stroke:0.3px #272628;white-space:pre;">holds </span>
<span class="t" id="t134" style="left:860.84px;top:560.62px;font-size:24px;transform:scaleX(0.9155);color:#fff;-webkit-text-stroke:0.3px #272628;white-space:pre;">for </span>
<span class="t" id="t135" style="left:892.59px;top:560.62px;font-size:24px;transform:scaleX(0.9128);color:#fff;-webkit-text-stroke:0.3px #272628;white-space:pre;">AI</span>
<span class="t" id="t136" style="left:152.50px;top:592.21px;font-size:24px;transform:scaleX(0.8754);color:#fff;-webkit-text-stroke:0.3px #272628;white-space:pre;">and </span>
<span class="t" id="t137" style="left:193.40px;top:592.21px;font-size:24px;transform:scaleX(0.8468);color:#fff;-webkit-text-stroke:0.3px #272628;white-space:pre;">its </span>
<span class="t" id="t138" style="left:219.37px;top:592.21px;font-size:24px;transform:scaleX(0.8921);color:#fff;-webkit-text-stroke:0.3px #272628;white-space:pre;">applications.</span>
<span class="t" id="t139" style="left:1000.30px;top:292.40px;font-size:26.5px;transform:scaleX(1.0111);color:#f6f6f6;-webkit-text-stroke:0.3px #0b0a0c;">What do you want to do (B...</span>
<span class="t" id="t140" style="left:1079.00px;top:328.61px;font-size:17.5px;transform:scaleX(1.0360);color:#1c1c1c;clip-path:inset(9.2px 0 0 0);">skiing, make it sound like William</span>
<span class="t" id="t141" style="left:1079.00px;top:354.80px;font-size:17.5px;transform:scaleX(0.9696);color:#1c1c1c;">Shakespeare</span>
<span class="t" id="t142" style="left:1035.30px;top:425.00px;font-size:17.5px;transform:scaleX(1.0567);color:#353535;">Whoops! I'm not able to</span>
<span class="t" id="t143" style="left:1035.30px;top:451.00px;font-size:17.5px;transform:scaleX(1.0275);color:#353535;">understand this yet. Is there</span>
<span class="t" id="t144" style="left:1035.30px;top:477.21px;font-size:17.5px;transform:scaleX(1.0395);color:#353535;">something I can do to help?</span>
<span class="t" id="t145" style="left:1079.00px;top:546.91px;font-size:17.5px;transform:scaleX(1.0343);color:#1c1c1c;">Just write about of a personal story</span>
<span class="t" id="t146" style="left:1079.00px;top:572.80px;font-size:17.5px;transform:scaleX(1.0479);color:#1c1c1c;">that relates to the document's</span>
<span class="t" id="t147" style="left:1079.00px;top:598.50px;font-size:17.5px;transform:scaleX(1.0766);color:#1c1c1c;">topic</span>
<span class="t" id="t148" style="left:1035.30px;top:667.21px;font-size:17.5px;transform:scaleX(1.0218);color:#353535;clip-path:inset(0 0 1.5px 0);">Done! What else can I help you</span>
<span class="t" id="t149" style="left:1041.50px;top:716.30px;font-size:17.5px;transform:scaleX(1.0272);color:#1c1c1c;">Start a document</span>
<span class="t" id="t150" style="left:1184.40px;top:716.30px;font-size:17.5px;transform:scaleX(1.0369);color:#c9c9c9;">of a personal story that</span>
<span class="t" id="t151" style="left:1041.50px;top:742.91px;font-size:17.5px;transform:scaleX(1.0494);color:#c9c9c9;">relates to the document's topic</span>
<span class="t" id="t152" style="left:1300.50px;top:751.00px;font-size:13px;transform:scaleX(1.1207);color:#707070;">Tab</span>
<span class="t" id="t153" style="left:1019.70px;top:850.81px;font-size:14px;transform:scaleX(1.0185);color:#6b6b6b;">Content is generated by AI and might contain inaccuracies</span>
<span class="t" id="t154" style="left:1019.70px;top:869.01px;font-size:14px;transform:scaleX(1.0165);color:#6b6b6b;">or sensitive material. Be sure to verify information.</span>
<span class="t" id="t155" style="left:1021.20px;top:895.00px;font-size:16px;transform:scaleX(0.9512);color:#4a6ab2;text-decoration:underline;text-decoration-thickness:1px;text-underline-offset:2px;">Help</span>
<span class="t" id="t156" style="left:11.20px;top:947.81px;font-size:13.5px;transform:scaleX(0.9600);">Page 1 of 1</span>
<span class="t" id="t157" style="left:101.20px;top:947.81px;font-size:13.5px;transform:scaleX(1.0186);">97 words</span>
<span class="t" id="t158" style="left:221.20px;top:947.81px;font-size:13.5px;transform:scaleX(0.9769);">English (India)</span>
<span class="t" id="t159" style="left:328.80px;top:947.81px;font-size:13.5px;transform:scaleX(0.9577);">Text Predictions: On</span>
<span class="t" id="t160" style="left:492.00px;top:947.81px;font-size:13.5px;transform:scaleX(0.9764);">Accessibility: Unavailable</span>
<span class="t" id="t161" style="left:991.00px;top:947.81px;font-size:13.5px;transform:scaleX(0.9085);">Focus</span>
<span class="t" id="t162" style="left:1380.30px;top:947.81px;font-size:13.5px;transform:scaleX(0.9759);">100%</span>
</div>
</body>
</html>
